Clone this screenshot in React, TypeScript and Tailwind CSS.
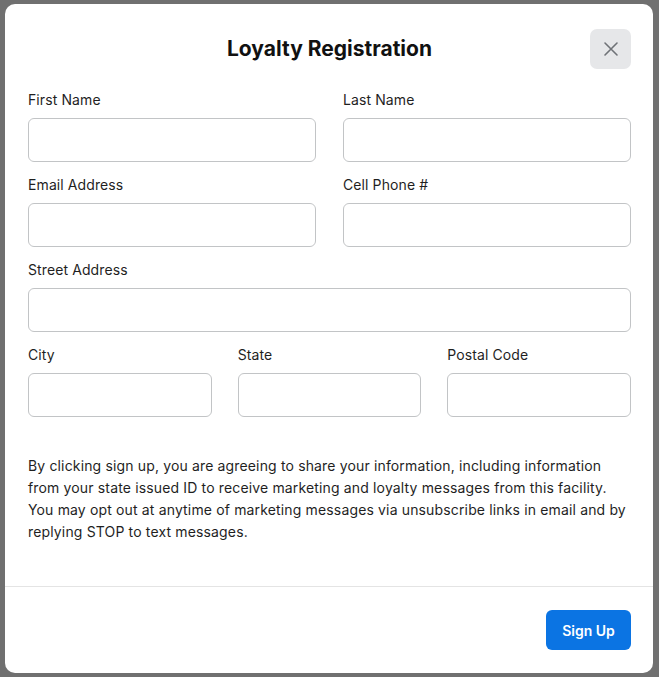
import React from "react";

function Field({ label, className = "" }: { label: string; className?: string }) {
  return (
    <div className={"flex flex-col " + className}>
      <label className="text-[14px] leading-[20px] text-[#1f1f1f] tracking-[0.1px]">{label}</label>
      <input
        type="text"
        className="mt-[8px] h-[44px] w-full rounded-[6px] border border-[#c2c4c6] bg-white outline-none"
      />
    </div>
  );
}

export default function App() {
  return (
    <div
      className="w-[659px] h-[677px] bg-[#707070] pt-[4px] pb-[4px] pl-[5px] pr-[6px]"
      style={{ fontFamily: 'Inter, "Liberation Sans", Arial, sans-serif' }}
    >
      <div className="h-full w-full bg-white rounded-[10px] flex flex-col overflow-hidden">
        <div className="flex-1 pl-[23px] pr-[22px]">
          <div className="relative mt-[25px] h-[40px] flex items-center justify-center">
            <h1 className="text-[21px] font-bold text-[#111] leading-[24px]">Loyalty Registration</h1>
            <button className="absolute right-0 top-0 w-[41px] h-[40px] rounded-[7px] bg-[#e6e7e9] flex items-center justify-center">
              <svg width="16" height="16" viewBox="0 0 16 16" fill="none" stroke="#6f7277" strokeWidth="1.6" strokeLinecap="round">
                <path d="M2 2L14 14M14 2L2 14" />
              </svg>
            </button>
          </div>

          <div className="mt-[21px] grid grid-cols-2 gap-x-[27px] gap-y-[13px]">
            <Field label="First Name" />
            <Field label="Last Name" />
            <Field label="Email Address" />
            <Field label="Cell Phone #" />
            <Field label="Street Address" className="col-span-2" />
          </div>
          <div className="mt-[13px] grid grid-cols-3 gap-x-[26px]">
            <Field label="City" />
            <Field label="State" />
            <Field label="Postal Code" />
          </div>

          <p className="mt-[38px] text-[14px] leading-[22px] text-[#1f1f1f] tracking-[0.15px] whitespace-nowrap">
            By clicking sign up, you are agreeing to share your information, including information
            <br />
            from your state issued ID to receive marketing and loyalty messages from this facility.
            <br />
            You may opt out at anytime of marketing messages via unsubscribe links in email and by
            <br />
            replying STOP to text messages.
          </p>
        </div>

        <div className="border-t border-[#e4e4e4] pl-[23px] pr-[22px] pt-[23px] pb-[23px] flex justify-end">
          <button className="h-[40px] w-[85px] rounded-[6px] bg-[#0b74e3] text-white text-[14px] font-semibold">
            Sign Up
          </button>
        </div>
      </div>
    </div>
  );
}
